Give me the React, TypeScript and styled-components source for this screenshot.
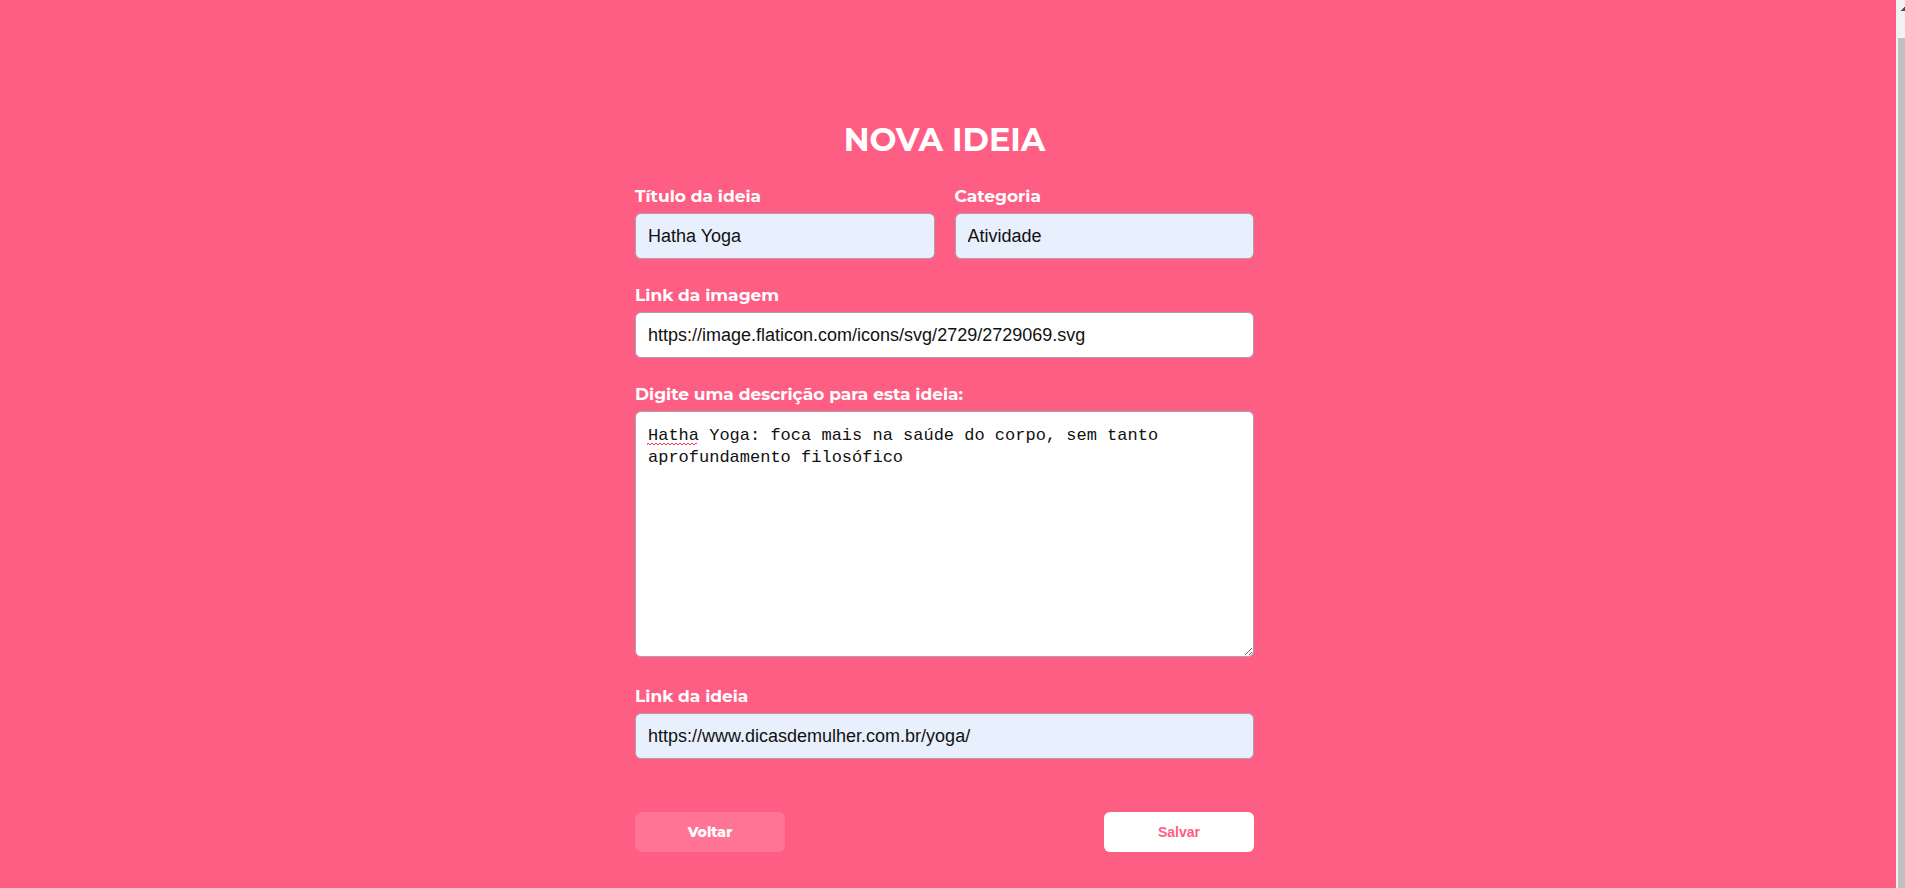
import React, { useState } from "react";
import styled, { createGlobalStyle } from "styled-components";

const GlobalStyle = createGlobalStyle`
  *, *::before, *::after { box-sizing: border-box; }
  body { margin: 0; background: #ff5e84; }
`;

const display = `Montserrat, Inter, "Open Sans", sans-serif`;

const Page = styled.div`
  display: flex;
  min-height: 100vh;
  background: #ff5e84;
`;

const Main = styled.main`
  flex: 1;
  display: flex;
  flex-direction: column;
  align-items: center;
  padding: 120px 7px 36px 0;
`;

const Form = styled.form`
  display: flex;
  flex-direction: column;
  gap: 25px;
  width: 100%;
  max-width: 619px;
`;

const Title = styled.h1`
  margin: 0;
  color: #fff;
  font: 700 32px/40px ${display};
  text-align: center;
`;

const Row = styled.div`
  display: grid;
  grid-template-columns: 1fr 1fr;
  gap: 20px;
`;

const FieldBox = styled.div`
  display: flex;
  flex-direction: column;
  gap: 6px;
  min-width: 0;
`;

const Label = styled.label`
  color: #fff;
  font: 700 17px/22px ${display};
`;

const Input = styled.input<{ $filled?: boolean }>`
  width: 100%;
  height: 46px;
  padding: 0 12px;
  border: 1px solid #a9a0b0;
  border-radius: 6px;
  outline: none;
  background: ${(p) => (p.$filled ? "#e8f0fe" : "#fff")};
  color: #111;
  font: 400 18px/22px "Liberation Sans", Arial, sans-serif;
`;

const EditorBox = styled.div`
  position: relative;
  display: flex;
  padding-bottom: 3px;
`;

const TextArea = styled.textarea`
  width: 100%;
  height: 246px;
  padding: 13px 12px;
  border: 1px solid #a9a0b0;
  border-radius: 6px;
  outline: none;
  resize: vertical;
  background: #fff;
  color: #111;
  font: 400 17px/22px Consolas, "Liberation Mono", monospace;
`;

const SpellMark = styled.svg`
  position: absolute;
  top: 31px;
  left: 12px;
  width: 50px;
  height: 4px;
  pointer-events: none;
`;

const Actions = styled.div`
  display: flex;
  justify-content: space-between;
  padding-top: 28px;
`;

const Button = styled.button<{ $primary?: boolean }>`
  width: 150px;
  height: 40px;
  border: 0;
  border-radius: 6px;
  cursor: pointer;
  background: ${(p) => (p.$primary ? "#fff" : "#ff7395")};
  color: ${(p) => (p.$primary ? "#ff5e84" : "#fff")};
  font: ${(p) => (p.$primary ? `700 14px/20px "Liberation Sans", Arial, sans-serif` : `800 14px/20px ${display}`)};
`;

const ScrollTrack = styled.div`
  position: sticky;
  top: 0;
  display: flex;
  flex-direction: column;
  width: 9px;
  height: 100vh;
  padding-left: 2px;
  background: #f1f1f1;
`;

const ScrollArrow = styled.svg`
  flex: none;
  width: 7px;
  height: 38px;
`;

const ScrollThumb = styled.div`
  flex: 1;
  background: #c1c1c1;
`;

type FieldProps = { id: string; label: string; value: string; filled?: boolean };

function Field({ id, label, value, filled }: FieldProps) {
  const [text, setText] = useState(value);
  return (
    <FieldBox>
      <Label htmlFor={id}>{label}</Label>
      <Input id={id} type="text" value={text} $filled={filled} onChange={(e) => setText(e.target.value)} />
    </FieldBox>
  );
}

const initialText = "Hatha Yoga: foca mais na saúde do corpo, sem tanto aprofundamento filosófico";
const wave = "M0 3" + Array.from({ length: 25 }, (_, i) => ` L${i * 2 + 1} ${i % 2 ? 3 : 1}`).join("") + " L50 2";

export default function App() {
  const [text, setText] = useState(initialText);
  return (
    <Page>
      <GlobalStyle />
      <Main>
        <Form onSubmit={(e) => e.preventDefault()}>
          <Title>NOVA IDEIA</Title>
          <Row>
            <Field id="titulo" label="Título da ideia" value="Hatha Yoga" filled />
            <Field id="categoria" label="Categoria" value="Atividade" filled />
          </Row>
          <Field id="imagem" label="Link da imagem" value="https://image.flaticon.com/icons/svg/2729/2729069.svg" />
          <FieldBox>
            <Label htmlFor="descricao">Digite uma descrição para esta ideia:</Label>
            <EditorBox>
              <TextArea id="descricao" spellCheck={false} value={text} onChange={(e) => setText(e.target.value)} />
              {text.startsWith("Hatha") && (
                <SpellMark viewBox="0 0 50 4" aria-hidden="true">
                  <path d={wave} fill="none" stroke="#ff3355" strokeWidth="1" />
                </SpellMark>
              )}
            </EditorBox>
          </FieldBox>
          <Field id="link" label="Link da ideia" value="https://www.dicasdemulher.com.br/yoga/" filled />
          <Actions>
            <Button type="button">Voltar</Button>
            <Button type="submit" $primary>Salvar</Button>
          </Actions>
        </Form>
      </Main>
      <ScrollTrack aria-hidden="true">
        <ScrollArrow viewBox="0 0 7 38">
          <path d="M3 11V10H4V9H5V8H6V7H7V11Z" fill="#505050" />
        </ScrollArrow>
        <ScrollThumb />
      </ScrollTrack>
    </Page>
  );
}
